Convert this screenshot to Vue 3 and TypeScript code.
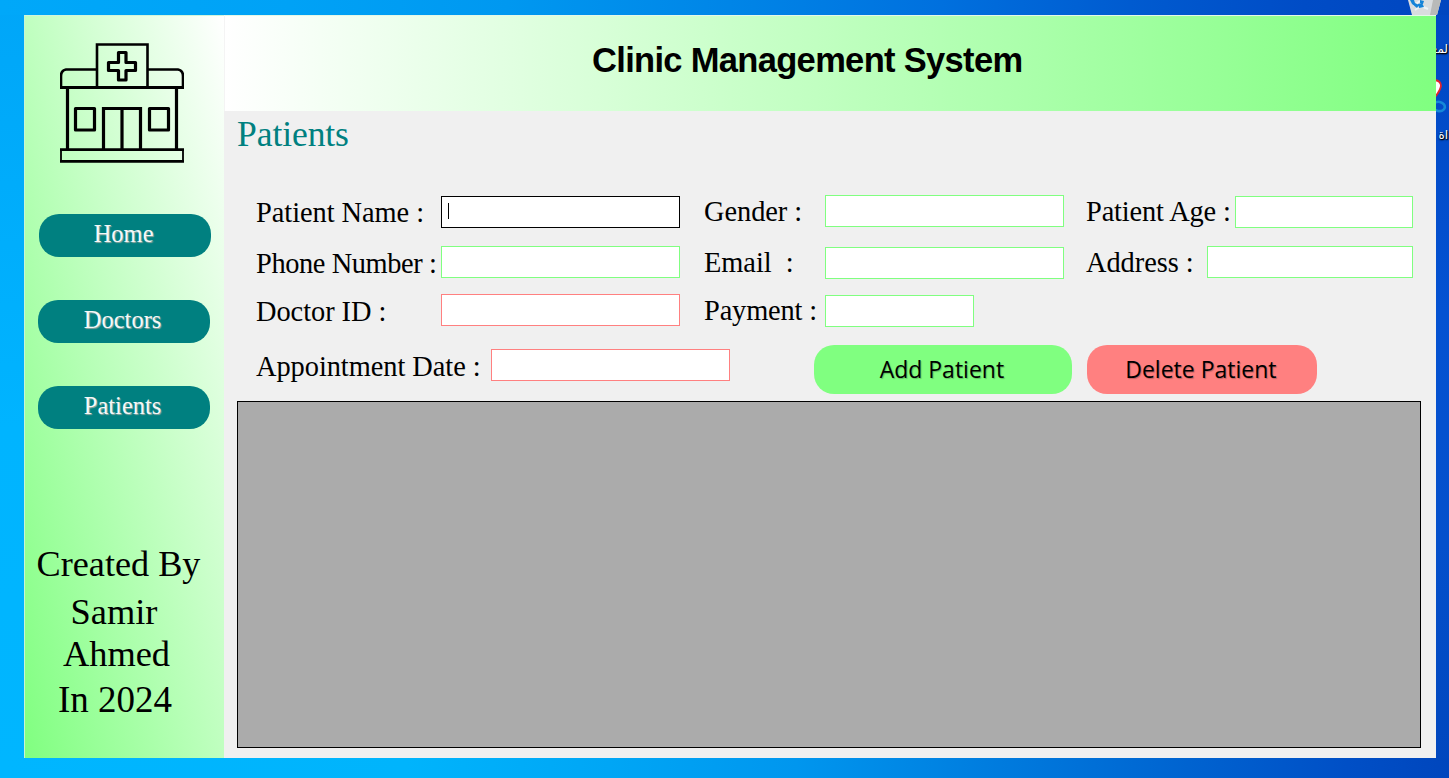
<script setup lang="ts">
interface Field {
  id: string
  label: string
  focused?: boolean
}

const navItems: string[] = ['Home', 'Doctors', 'Patients']
const credits: string[] = ['Created By', 'Samir', 'Ahmed', 'In 2024']

const columns: { id: string; fields: Field[] }[] = [
  {
    id: 'left',
    fields: [
      { id: 'name', label: 'Patient Name :', focused: true },
      { id: 'phone', label: 'Phone Number :' },
      { id: 'doctor', label: 'Doctor ID :' },
      { id: 'date', label: 'Appointment Date :' },
    ],
  },
  {
    id: 'middle',
    fields: [
      { id: 'gender', label: 'Gender :' },
      { id: 'email', label: 'Email  :' },
      { id: 'payment', label: 'Payment :' },
    ],
  },
  {
    id: 'right',
    fields: [
      { id: 'age', label: 'Patient Age :' },
      { id: 'address', label: 'Address :' },
    ],
  },
]
</script>

<template>
  <div class="desktop">
    <svg class="bin" width="44" height="15" viewBox="0 0 44 15">
      <path d="M6 0 L10 15 H35 L39 0Z" fill="#d9dcdf" />
      <path d="M31 0 L28 15 H35 L39 0Z" fill="#b9bab9" />
      <path d="M9 0 L12 5 L18 1 M13 10 L19 6 L26 9" stroke="#eef3f6" stroke-width="2" fill="none" />
      <path d="M8 0 L12 0 L13 3 L17 5 L15 8 L10 4Z M18 0 L22 1 L21 4 L18 3Z M16 4 L20 3 L22 7 L17 8Z" fill="#1583d8" />
    </svg>
    <span class="desk-label desk-top">لمعـ</span>
    <svg class="shortcut" width="14" height="36" viewBox="0 0 14 36">
      <path d="M0 2 Q6 3 6 8 Q5 13 0 19Z" fill="#fff" stroke="#e3232c" stroke-width="1.8" />
      <ellipse cx="4" cy="28.500" rx="6" ry="4.600" fill="none" stroke="#1588d8" stroke-width="2.600" transform="rotate(12 4 28)" />
    </svg>
    <span class="desk-label desk-bottom">اة</span>

    <div class="window">
      <aside class="sidebar">
        <svg class="logo" width="124" height="121" viewBox="0 0 124 121" fill="none" stroke="#000">
          <g stroke-width="3.200">
            <path d="M37 44 V1.500 H87.500 V44" stroke-width="2.600" />
            <path d="M37 26.500 H6 Q1 27.500 1 33 V44 M87.500 26.500 H118 Q123 27.500 123 33 V44" stroke-width="2.600" />
            <path d="M0 44.500 H124" />
            <path d="M7.500 45 V106 M116.500 45 V106" />
            <path d="M0 106.700 H124 M0 118.400 H124" stroke-width="2.800" />
            <path d="M1 106 V119 M123 106 V119" stroke-width="1.800" />
            <path d="M43.500 106 V65.500 H80.500 V106 M62 66 V106" />
            <path d="M15.500 65.500 H34.500 V87 H15.500Z M89.500 65.500 H108.500 V87 H89.500Z" stroke-linejoin="round" />
            <path d="M58.500 9.500 H66 V19.500 H75.500 V27.500 H66 V37 H58.500 V27.500 H48.500 V19.500 H58.500Z" stroke-linejoin="round" />
          </g>
        </svg>
        <nav class="nav">
          <button v-for="item in navItems" :key="item" class="nav-item" :class="item.toLowerCase()">{{ item }}</button>
        </nav>
        <div class="credits">
          <div v-for="(line, i) in credits" :key="line" class="credit" :class="'credit-' + i">{{ line }}</div>
        </div>
      </aside>

      <main class="main">
        <header class="banner"><h1 class="title">Clinic Management System</h1></header>
        <h2 class="heading">Patients</h2>
        <section class="form">
          <div v-for="col in columns" :key="col.id" class="column" :class="col.id">
            <div v-for="f in col.fields" :key="f.id" class="field" :class="f.id">
              <span class="label">{{ f.label }}</span>
              <div class="input"><i v-if="f.focused" class="caret"></i></div>
            </div>
          </div>
          <div class="actions">
            <button class="action add">Add Patient</button>
            <button class="action delete">Delete Patient</button>
          </div>
        </section>
        <div class="grid"></div>
      </main>
    </div>
  </div>
</template>

<style>
body {
  margin: 0;
  overflow: hidden;
}
</style>

<style scoped>
.desktop {
  position: relative;
  box-sizing: border-box;
  width: 1449px;
  height: 778px;
  padding: 15px 13px 20px 24px;
  overflow: hidden;
  background:
    linear-gradient(90deg, #00a8f9 0%, #00a2f6 20%, #0098f0 35%, #0083e6 52%, #0070de 65%, #005bd0 78%, #004cc6 90%, #0046c0 100%) top / 100% 15px no-repeat,
    linear-gradient(90deg, #00b6ff 0%, #00b4fc 28%, #00a6f5 42%, #0096ee 55%, #007ddf 68%, #0063d0 82%, #004fc6 93%, #0046bd 100%) bottom / 100% 20px no-repeat,
    linear-gradient(#00a6f8, #00b4ff 55%, #00b6ff) left / 24px 100% no-repeat,
    linear-gradient(#0047c3, #0452d2 40%, #0450cc 70%, #0046bd);
}
.bin {
  position: absolute;
  left: 1402px;
  top: 0;
}
.desk-label {
  position: absolute;
  right: 1px;
  color: #fff;
  font: 12px/16px 'DejaVu Sans', sans-serif;
  text-shadow: 1px 1px 1px #000, 0 1px 2px #000;
  white-space: nowrap;
}
.desk-top {
  top: 41px;
}
.desk-bottom {
  top: 127px;
}
.shortcut {
  position: absolute;
  left: 1435px;
  top: 78px;
}
.window {
  position: relative;
  display: flex;
  height: 743px;
  background: #f0f0f0;
}
.sidebar {
  display: flex;
  flex-direction: column;
  box-sizing: border-box;
  width: 200px;
  padding-top: 27px;
  border-left: 1px solid #c8f5d4;
  border-top: 1px solid #d0f5dc;
  background: linear-gradient(to top right, #80ff80, #fff);
  font-family: 'Liberation Serif', serif;
}
.logo {
  margin-left: 35px;
}
.nav {
  display: flex;
  flex-direction: column;
  gap: 44px;
  padding: 50px 0 0 12.600px;
}
.nav-item {
  box-sizing: border-box;
  width: 172px;
  height: 43px;
  margin-bottom: -1px;
  padding: 0 2px 3px 0;
  border: 0;
  border-radius: 20px;
  background: #008080;
  color: #f4f8f8;
  font: 24.500px/40px 'Liberation Serif', serif;
  text-shadow: 1px 1px 1px #98a8a0;
}
.home {
  margin-left: 1px;
}
.credits {
  padding-top: 115px;
  font-size: 36.400px;
  line-height: 42px;
  text-align: center;
  white-space: nowrap;
}
.credit-0 {
  padding-right: 12px;
  font-size: 36.200px;
}
.credit-1 {
  margin-top: 6px;
  padding-right: 21px;
}
.credit-2 {
  padding-right: 16px;
}
.credit-3 {
  margin-top: 4px;
  padding-right: 19px;
  font-size: 37px;
}
.main {
  display: flex;
  flex: 1;
  flex-direction: column;
}
.banner {
  box-sizing: border-box;
  height: 96px;
  padding: 21px 0 0 367px;
  border-top: 1px solid #e4f8e8;
  border-left: 1px solid #f4f4f4;
  background: linear-gradient(90deg, #fff, #80ff80);
}
.title {
  margin: 0;
  font: 700 34.500px/46px 'Liberation Sans', sans-serif;
  letter-spacing: -0.680px;
  white-space: nowrap;
}
.heading {
  box-sizing: border-box;
  height: 84px;
  margin: 0;
  padding-left: 13px;
  color: #008080;
  font: 35.600px/46px 'Liberation Serif', serif;
  letter-spacing: -0.100px;
}
.form {
  display: grid;
  grid-template-columns: 448px 382px 327px;
  grid-template-rows: 150px 50px;
  height: 206px;
  padding-left: 32px;
}
.column {
  display: flex;
  flex-direction: column;
}
.left {
  grid-row: 1 / 3;
  padding-top: 1px;
}
.right {
  padding-top: 1px;
}
.field {
  display: flex;
  justify-content: space-between;
  height: 32px;
}
.label {
  font: 28.400px/36px 'Liberation Serif', serif;
  letter-spacing: -0.050px;
  white-space: pre;
}
.name .label,
.right .address .label,
.middle .gender .label {
  line-height: 34px;
}
.right .label,
.middle .label {
  line-height: 32px;
}
.phone .label {
  letter-spacing: -0.400px;
}
.input {
  box-sizing: border-box;
  flex-shrink: 0;
  width: 239px;
  height: 32px;
  padding: 7px 6px;
  border: 1px solid #80ff80;
  background: #fff;
}
.left .field {
  width: 424px;
}
.middle .field {
  width: 360px;
}
.right .field {
  width: 327px;
}
.name .input {
  border-color: #000;
}
.doctor .input,
.date .input {
  border-color: #ff8080;
}
.phone,
.address {
  margin-top: 18px;
}
.email {
  margin-top: 20px;
}
.doctor,
.payment {
  margin-top: 16px;
}
.left .date {
  width: 474px;
  margin-top: 23px;
}
.middle .payment {
  width: 270px;
}
.payment .input {
  width: 149px;
}
.payment .label,
.age .label {
  letter-spacing: -0.150px;
}
.age .input {
  width: 178px;
}
.address .input {
  width: 206px;
}
.caret {
  display: block;
  width: 1px;
  height: 16px;
  margin-top: -1px;
  background: #000;
}
.actions {
  display: flex;
  gap: 15px;
  grid-column: 2 / 4;
  padding: 0.400px 0 0 110.400px;
}
.action {
  height: 49px;
  padding: 0 3px 0 0;
  border: 0;
  border-radius: 20px;
  color: #000;
  font: 23px/49px 'Open Sans', sans-serif;
  text-shadow: 1px 1px 1px rgba(0, 0, 0, 0.25);
}
.add {
  width: 258px;
  background: #80ff80;
}
.delete {
  width: 230px;
  background: #ff8080;
}
.grid {
  box-sizing: border-box;
  width: 1184px;
  height: 347px;
  margin-left: 13px;
  border: 1px solid #000;
  background: #ababab;
}
</style>
